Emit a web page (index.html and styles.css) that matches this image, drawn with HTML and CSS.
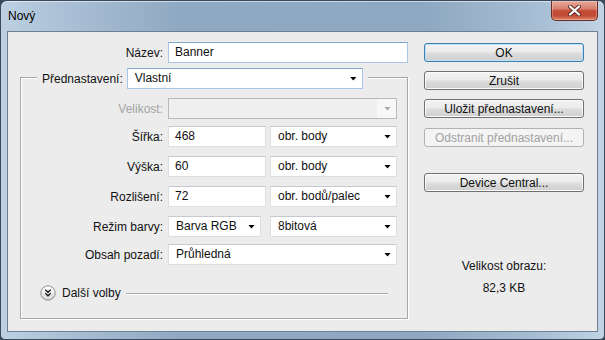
FILE: index.html
```html
<!DOCTYPE html>
<html lang="cs">
<head>
  <meta charset="UTF-8">
  <meta name="viewport" content="width=device-width, initial-scale=1.0">
  <title>Nový</title>
  <link rel="stylesheet" href="styles.css">
</head>
<body>

  <div class="window">
    <!-- Title bar -->
    <div class="titlebar">
      <span class="title">Nový</span>
      <button class="close" type="button">
        <svg width="13" height="11" viewBox="0 0 13 11">
          <path d="M2 1.5 L11 9.5 M11 1.5 L2 9.5" stroke="#5a2a22" stroke-width="4" stroke-linecap="round" fill="none"/>
          <path d="M2 1.5 L11 9.5 M11 1.5 L2 9.5" stroke="#ffffff" stroke-width="2.2" stroke-linecap="round" fill="none"/>
        </svg>
      </button>
    </div>

    <!-- Dialog body -->
    <div class="client">
      <div class="form">
        <div class="row">
          <label class="lbl">Název:</label>
          <div class="field input active w-name">Banner</div>
        </div>

        <div class="group">
          <div class="legend">
            <label>Přednastavení:</label>
            <div class="field dropdown active w-preset">Vlastní</div>
          </div>

          <div class="row gap9">
            <label class="lbl disabled">Velikost:</label>
            <div class="field dropdown off w-full"></div>
          </div>
          <div class="row gap7">
            <label class="lbl">Šířka:</label>
            <div class="field input w-num">468</div>
            <div class="field dropdown w-unit">obr. body</div>
          </div>
          <div class="row gap9">
            <label class="lbl">Výška:</label>
            <div class="field input w-num">60</div>
            <div class="field dropdown w-unit">obr. body</div>
          </div>
          <div class="row gap9">
            <label class="lbl">Rozlišení:</label>
            <div class="field input w-num">72</div>
            <div class="field dropdown w-unit">obr. bodů/palec</div>
          </div>
          <div class="row gap9">
            <label class="lbl">Režim barvy:</label>
            <div class="field dropdown w-mode">Barva RGB</div>
            <div class="field dropdown w-depth">8bitová</div>
          </div>
          <div class="row gap7">
            <label class="lbl">Obsah pozadí:</label>
            <div class="field dropdown w-full">Průhledná</div>
          </div>

          <div class="more">
            <svg class="more-icon" width="16" height="16" viewBox="0 0 16 16">
              <defs>
                <linearGradient id="knob" x1="0" y1="0" x2="0" y2="1">
                  <stop offset="0" stop-color="#ffffff"/>
                  <stop offset="1" stop-color="#d6d6d6"/>
                </linearGradient>
              </defs>
              <circle cx="8" cy="8" r="7.2" fill="url(#knob)" stroke="#8d8d8d" stroke-width="1"/>
              <path d="M5.3 4.8 L8 7.2 L10.7 4.8 M5.3 8.3 L8 10.7 L10.7 8.3" stroke="#1c1c1c" stroke-width="1.4" fill="none"/>
            </svg>
            <span>Další volby</span>
            <div class="more-line"></div>
          </div>
        </div>
      </div>

      <!-- Buttons -->
      <div class="side">
        <button class="btn default" type="button">OK</button>
        <button class="btn b-cancel" type="button">Zrušit</button>
        <button class="btn b-save" type="button">Uložit přednastavení...</button>
        <button class="btn b-delete" type="button" disabled>Odstranit přednastavení...</button>
        <button class="btn b-device" type="button">Device Central...</button>

        <div class="info">Velikost obrazu:</div>
        <div class="info value">82,3 KB</div>
      </div>
    </div>
  </div>

</body>
</html>
```

FILE: styles.css
```css
* {
  box-sizing: border-box;
}

html, body {
  margin: 0;
  padding: 0;
}

body {
  background-color: #3b4a5a;
  font-family: "Liberation Sans", Arial, sans-serif;
  font-size: 12px;
  color: #111;
}

.window {
  height: 340px;
  display: flex;
  flex-direction: column;
  border: 1px solid #3a4a5c;
  border-radius: 7px 7px 5px 5px;
  background: linear-gradient(to right, #bdd0e3 0%, #a8bed4 12%, #8fa9c2 30%, #8ea8c1 70%, #a8bfd5 90%, #c1d3e5 100%);
  box-shadow: inset 0 1px 0 rgba(255, 255, 255, 0.55);
  overflow: hidden;
}

/* title bar */
.titlebar {
  height: 30px;
  display: flex;
  justify-content: space-between;
  align-items: flex-start;
  padding: 0 6px 0 7px;
}

.title {
  margin-top: 8px;
  line-height: 14px;
  color: #000;
}

.close {
  width: 47px;
  height: 20px;
  margin: 0;
  padding: 0;
  border: 1px solid #6d2c22;
  border-top: none;
  border-radius: 0 0 5px 5px;
  background: linear-gradient(#e6ab9a 0%, #d98170 40%, #c44a35 52%, #c24c36 78%, #dc8a6c 100%);
  box-shadow: inset 0 0 0 1px rgba(255, 255, 255, 0.25);
  display: flex;
  align-items: center;
  justify-content: center;
}

/* client area */
.client {
  flex: 1;
  margin: 0 6px 7px 6px;
  border: 1px solid #6e7f92;
  background-color: #ececec;
  display: flex;
  padding: 10px 0 0 12px;
}

.form {
  width: 388px;
}

.row {
  display: flex;
  align-items: center;
  gap: 5px;
  height: 21px;
}

.row.gap9 {
  margin-top: 9px;
}

.row.gap7 {
  margin-top: 7px;
}

.lbl {
  width: 143px;
  text-align: right;
}

.group .lbl {
  width: 142px;
}

.lbl.disabled {
  color: #a3a3a3;
}

.group {
  margin-top: 14px;
  border: 1px solid #a7a7a7;
  box-shadow: 1px 1px 0 #fff, inset 1px 1px 0 #fff;
  padding-bottom: 17px;
  display: flex;
  flex-direction: column;
}

.legend {
  align-self: flex-start;
  margin: -10px 0 0 16px;
  padding: 0 5px;
  background-color: #ececec;
  display: flex;
  align-items: center;
  gap: 4px;
  height: 21px;
}

/* inputs and dropdowns */
.field {
  height: 21px;
  line-height: 19px;
  background-color: #fff;
  border: 1px solid #dcdfe3;
  border-top-color: #c6c9ce;
  padding: 0 6px;
  white-space: nowrap;
}

.field.active {
  border-color: #a9c6e6;
  border-top-color: #82a7d1;
}

.dropdown {
  display: flex;
  align-items: center;
  justify-content: space-between;
  padding: 0 5px 0 7px;
}

.dropdown::after {
  content: "";
  width: 7px;
  height: 4px;
  background-color: #000;
  clip-path: polygon(0 0, 100% 0, 50% 100%);
  margin-left: auto;
}

.dropdown.off {
  background: linear-gradient(to right, #efefef 0, #efefef calc(100% - 19px), #f7f7f7 calc(100% - 19px));
  border-color: #b9b9b9;
}

.dropdown.off::after {
  background-color: #a8a8a8;
}

.w-name { width: 240px; }
.w-preset { width: 236px; }
.w-full { width: 229px; }
.w-num { width: 98px; }
.w-unit { width: 127px; margin-left: -1px; }
.w-mode { width: 93px; }
.w-depth { width: 127px; margin-left: 4px; }

.more {
  margin-top: 20px;
  height: 16px;
  display: flex;
  align-items: center;
  padding: 0 19px;
}

.more-icon {
  flex: none;
  margin-right: 6px;
}

.more-line {
  flex: 1;
  margin-left: 5px;
  border-top: 1px solid #a7a7a7;
  box-shadow: 0 1px 0 #fff;
}

/* right column */
.side {
  margin: 1px 0 0 16px;
  width: 160px;
  display: flex;
  flex-direction: column;
}

.btn {
  height: 19px;
  margin: 0;
  padding: 0;
  font-family: inherit;
  font-size: 12px;
  color: #111;
  border: 1px solid #707070;
  border-radius: 3px;
  background: linear-gradient(#f3f3f3 0%, #ebebeb 48%, #dddddd 52%, #cfcfcf 100%);
  box-shadow: inset 0 0 0 1px #fbfbfb;
}

.btn.default {
  border-color: #3c7fb1;
  box-shadow: inset 0 0 0 1px #bde2f6;
}

.b-cancel { margin-top: 9px; }
.b-save { margin-top: 9px; }
.b-delete {
  margin-top: 10px;
  color: #a2a2a2;
  border-color: #adb2b5;
  background: #f4f4f4;
  box-shadow: none;
}
.b-device { margin-top: 26px; }

.info {
  margin-top: 67px;
  text-align: center;
  line-height: 15px;
}

.info.value {
  margin-top: 7px;
}
```
